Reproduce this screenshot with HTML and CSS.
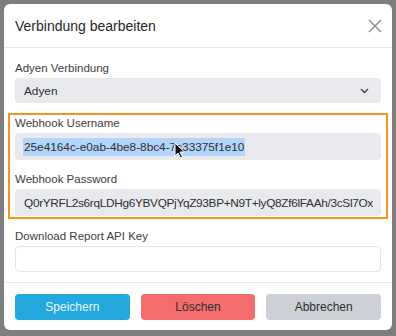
FILE: index.html
```html
<!DOCTYPE html>
<html lang="de">
<head>
  <meta charset="UTF-8">
  <meta name="viewport" content="width=device-width, initial-scale=1.0">
  <title>Verbindung bearbeiten</title>
  <link rel="stylesheet" href="styles.css">
</head>
<body>

  <div class="modal">
    <div class="modal-header">
      <h1>Verbindung bearbeiten</h1>
      <svg class="close" width="14" height="14" viewBox="0 0 14 14">
        <path d="M1 1 L13 13 M13 1 L1 13" stroke="#8a8a8a" stroke-width="1.4" fill="none"/>
      </svg>
    </div>

    <div class="modal-body">
      <label>Adyen Verbindung</label>
      <div class="field select">
        <span>Adyen</span>
        <svg class="chevron" width="9" height="6" viewBox="0 0 9 6">
          <path d="M1 1 L4.5 4.5 L8 1" stroke="#444" stroke-width="1.4" fill="none"/>
        </svg>
      </div>

      <div class="highlight">
        <label>Webhook Username</label>
        <div class="field">
          <span class="selected">25e4164c-e0ab-4be8-8bc4-7c33375f1e10</span>
          <svg class="pointer" width="12" height="17" viewBox="0 0 12 17">
            <path d="M1 1 L1 14 L4 11 L6.5 16 L8.5 15 L6 10 L10.5 10 Z" fill="#111" stroke="#fff" stroke-width="1"/>
          </svg>
        </div>
        <label class="second">Webhook Password</label>
        <div class="field">
          <span class="clip">Q0rYRFL2s6rqLDHg6YBVQPjYqZ93BP+N9T+lyQ8Zf6lFAAh/3cSl7Ox/kd92LmQ</span>
        </div>
      </div>

      <label>Download Report API Key</label>
      <div class="field empty"></div>
    </div>

    <div class="modal-footer">
      <button class="save">Speichern</button>
      <button class="delete">Löschen</button>
      <button class="cancel">Abbrechen</button>
    </div>
  </div>

</body>
</html>
```

FILE: styles.css
```css
body {
  margin: 0;
  height: 336px;
  background-color: #7e7e7e;
  font-family: "Liberation Sans", Arial, sans-serif;
  overflow: hidden;
}

.modal {
  margin: 4px;
  width: 388px;
  height: 326px;
  background-color: #fff;
  border-radius: 6px;
  display: flex;
  flex-direction: column;
}

.modal-header {
  height: 43px;
  border-bottom: 1px solid #e6e8ec;
  display: flex;
  align-items: center;
  justify-content: space-between;
  padding: 0 10px 0 11px;
}

.modal-header h1 {
  margin: 1px 0 0;
  font-size: 14px;
  font-weight: normal;
  color: #262626;
}

.modal-body {
  padding: 13px 11px 10px;
}

label {
  display: block;
  font-size: 11.5px;
  line-height: 14px;
  color: #3d3d3d;
  margin-bottom: 3px;
}

.field {
  position: relative;
  height: 27px;
  background-color: #e9eaee;
  border-radius: 4px;
  display: flex;
  align-items: center;
  padding: 0 8px 0 9px;
  font-size: 11.8px;
  color: #2e2e2e;
  white-space: nowrap;
  overflow: hidden;
}

/* password is longer than the field, cut it at the inner edge */
.field .clip {
  display: block;
  flex: 1;
  overflow: hidden;
  letter-spacing: -0.3px;
}

.field.select {
  height: 25px;
  justify-content: space-between;
  padding-right: 12px;
}

.field.empty {
  height: 24px;
  background-color: #fff;
  border: 1px solid #e3e5e8;
}

.selected {
  background-color: #b4d5fb;
  padding: 2px 1px;
  margin-left: -1px;
}

.pointer {
  position: absolute;
  left: 159px;
  top: 9px;
}

.highlight {
  margin: 10px -7px 10px;
  border: 2px solid #f7931e;
  padding: 1px 5px;
}

.highlight label.second {
  margin-top: 12px;
}

.modal-footer {
  border-top: 1px solid #e6e8ec;
  padding: 11px 11px 9px;
  display: grid;
  grid-template-columns: repeat(3, 1fr);
  gap: 11px;
}

.modal-footer button {
  height: 26px;
  border: none;
  border-radius: 4px;
  font-family: "Liberation Sans", Arial, sans-serif;
  font-size: 12px;
  color: #2e2e2e;
}

button.save {
  background-color: #23a9de;
  color: #e6f6fd;
}

button.delete {
  background-color: #f46c6c;
}

button.cancel {
  background-color: #cdd1d7;
}
```
